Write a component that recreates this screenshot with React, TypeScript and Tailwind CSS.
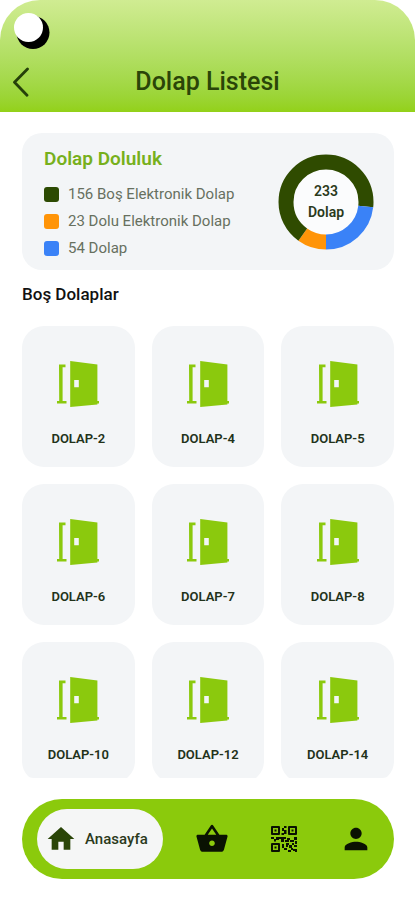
import { MdHome, MdPerson, MdShoppingBasket } from "react-icons/md";

const LEGEND = [
  { label: "156 Boş Elektronik Dolap", color: "bg-[#2c4a02]" },
  { label: "23 Dolu Elektronik Dolap", color: "bg-[#ff9408]" },
  { label: "54 Dolap", color: "bg-[#3a82f7]" },
];

// clockwise, starting at the bottom of the ring
const SEGMENTS = [
  { count: 23, color: "#ff9408" },
  { count: 156, color: "#2f4b00" },
  { count: 54, color: "#3a82f7" },
];

const LOCKERS = [2, 4, 5, 6, 7, 8, 10, 12, 14];

function LockerChart() {
  const total = SEGMENTS.reduce((sum, segment) => sum + segment.count, 0);
  let start = 0;

  return (
    <div className="grid shrink-0 place-items-center">
      <svg viewBox="0 0 96 96" className="col-start-1 row-start-1 size-24" aria-hidden="true">
        <circle cx="48" cy="48" r="36" fill="#fbfcfd" />
        {SEGMENTS.map((segment) => {
          const offset = start;
          start += segment.count;
          return (
            <circle
              key={segment.color}
              cx="48"
              cy="48"
              r="40"
              fill="none"
              stroke={segment.color}
              strokeWidth="15"
              pathLength={total}
              strokeDasharray={`${segment.count} ${total - segment.count}`}
              strokeDashoffset={-offset}
              transform="rotate(90 48 48)"
            />
          );
        })}
      </svg>
      <p className="col-start-1 row-start-1 text-center text-[14px] leading-[21px] font-semibold text-[#2b3a1c]">
        233
        <br />
        Dolap
      </p>
    </div>
  );
}

function LockerIcon() {
  return (
    <svg viewBox="0 0 44 48" className="h-12 w-11" fill="#8bc90d" aria-hidden="true">
      <path d="M3 4.5H9.5V7.2H6.6V41H10.5V43.6H1V41H3.2Z" />
      <path
        fillRule="evenodd"
        d="M14.2 1L41.4 4.4V41H43V43.6H41.4V44.4L14.2 47ZM18.2 20V27.2H22.8V20Z"
      />
    </svg>
  );
}

function QrIcon() {
  return (
    <svg viewBox="0 0 26 26" className="size-[26px]" fill="#0a1202" aria-hidden="true">
      <path
        fillRule="evenodd"
        d="M0 1Q0 0 1 0H8Q9 0 9 1V8Q9 9 8 9H1Q0 9 0 8ZM2 2V7H7V2ZM17 1Q17 0 18 0H25Q26 0 26 1V8Q26 9 25 9H18Q17 9 17 8ZM19 2V7H24V2ZM0 18Q0 17 1 17H8Q9 17 9 18V25Q9 26 8 26H1Q0 26 0 25ZM2 19V24H7V19Z"
      />
      <path d="M3.5 3.5h2v2h-2zM20.5 3.5h2v2h-2zM3.5 20.5h2v2h-2z" />
      <path d="M13 0h2.5v2H13zM11 2h2v3h-2zM13 4h2.5v4H13zM10.5 7H13v2h-2.5z" />
      <path d="M0 11h3v2H0zM3 13h2v2.5H3zM5 11h3v3H5zM8 11h7v2H8zM10 13h3v3h-3zM14 14h4v2h-4zM16 12h3v2h-3zM19 14h4v2h-4zM23 11h3v3h-3zM24 15h2v3h-2z" />
      <path d="M11 18h2v4h-2zM13 22h3v2h-3zM15 17h3v2h-3zM15 19h2v2h-2zM18 19h3v3h-3zM21 17h2v2h-2zM17 24h3v2h-3zM20 22h2v2h-2zM22 23h4v3h-2v-1h-2zM23 19h3v2h-3z" />
    </svg>
  );
}

function Header() {
  return (
    <header className="h-28 shrink-0 rounded-t-[40px] bg-linear-to-b from-[#d0ec92] to-[#93d117] px-3 pt-3">
      <div className="px-0.5">
        <svg viewBox="0 0 36 38" className="h-[38px] w-9" aria-hidden="true">
          <circle cx="19" cy="20.5" r="16.5" fill="#000" />
          <circle cx="14.5" cy="15.5" r="14.5" fill="#fff" />
        </svg>
      </div>
      <div className="mt-4 grid grid-cols-[20px_1fr_20px] items-center">
        <button type="button" aria-label="Geri" className="text-[#26400a]">
          <svg viewBox="0 0 18 30" className="h-[30px] w-[18px]" fill="none" stroke="currentColor" strokeWidth="2.8" strokeLinecap="round" strokeLinejoin="round">
            <path d="M15.5 2L2.5 15.2L15 28.2" />
          </svg>
        </button>
        <h1 className="text-center text-[25px] leading-8 font-medium text-[#2a4508]">Dolap Listesi</h1>
      </div>
    </header>
  );
}

function BottomNav() {
  return (
    <nav className="my-[21px] mr-[21px] ml-[22px] flex h-20 shrink-0 items-center rounded-full bg-[#8bca0c] pr-[21px] pl-[15px] text-[#0a1202]">
      <a href="#anasayfa" aria-current="page" className="flex h-[60px] w-[126px] items-center gap-2 rounded-full bg-[#f5f6f6] pl-2 text-[#2a4508]">
        <MdHome className="size-8 shrink-0" />
        <span className="text-[15px] font-medium text-[#2b3a1c]">Anasayfa</span>
      </a>
      <div className="ml-8 flex flex-1 items-center justify-between">
        <a href="#sepet" aria-label="Sepet">
          <MdShoppingBasket className="size-[34px]" />
        </a>
        <a href="#qr" aria-label="QR kod">
          <QrIcon />
        </a>
        <a href="#profil" aria-label="Profil">
          <MdPerson className="size-[34px]" />
        </a>
      </div>
    </nav>
  );
}

export default function App() {
  return (
    <div className="flex h-screen flex-col bg-white font-[Roboto,sans-serif]">
      <Header />

      <main className="flex min-h-0 flex-1 flex-col pt-[21px] pr-[21px] pl-[22px]">
        <section className="flex h-[137px] shrink-0 items-center justify-between rounded-[20px] bg-[#f3f5f7] pr-5 pl-[22px]">
          <div className="pt-1.5">
            <h2 className="text-[19px] leading-6 font-semibold text-[#77b01c]">Dolap Doluluk</h2>
            <ul className="mt-2.5">
              {LEGEND.map((item) => (
                <li key={item.label} className="flex h-[27px] items-center gap-[9px] text-[15px] text-[#67705f]">
                  <span className={`size-[15px] rounded-[3px] ${item.color}`} />
                  {item.label}
                </li>
              ))}
            </ul>
          </div>
          <LockerChart />
        </section>

        <h2 className="mt-3 text-[17px] leading-6 font-medium text-[#111]">Boş Dolaplar</h2>

        <div className="mt-5 min-h-0 flex-1 overflow-hidden rounded-b-[12px]">
          <ul className="grid grid-cols-3 gap-[17px]">
            {LOCKERS.map((number) => (
              <li key={number}>
                <button type="button" className="flex h-[141px] w-full flex-col items-center rounded-[22px] bg-[#f3f5f7] pt-[34px]">
                  <LockerIcon />
                  <span className="mt-[21px] text-[13px] leading-5 font-semibold text-[#22321a]">
                    DOLAP-{number}
                  </span>
                </button>
              </li>
            ))}
          </ul>
        </div>
      </main>

      <BottomNav />
    </div>
  );
}
